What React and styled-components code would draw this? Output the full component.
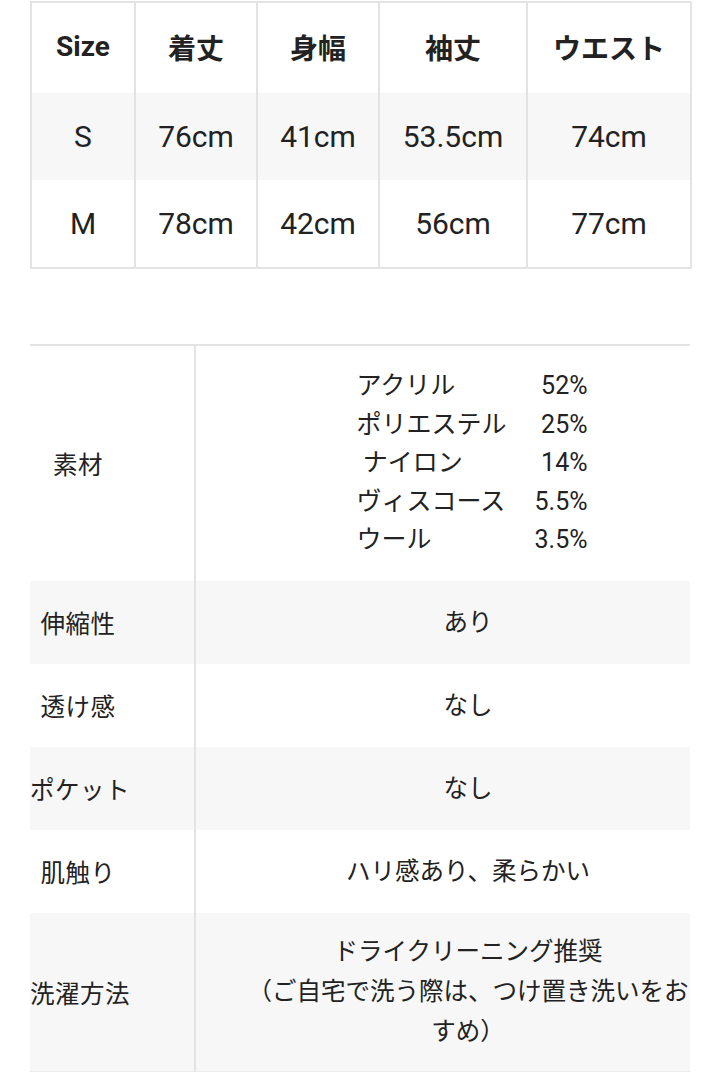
import React from 'react'
import styled, { createGlobalStyle } from 'styled-components'

const GlobalStyle = createGlobalStyle`
body {
  margin: 0;
  background: #ffffff;
  font-family: Roboto, "Noto Sans CJK JP", sans-serif;
  color: #222222;
}
`

const Page = styled.div`
  width: 720px;
  padding: 1px 30px 0;
  box-sizing: border-box;
`

const SizeTable = styled.table`
  width: 660px;
  border-collapse: collapse;
  table-layout: fixed;
  border: 2px solid #e3e3e3;
`

const SizeRow = styled.tr`
  background: ${(p) => (p.$shade ? '#f7f7f7' : '#ffffff')};
`

const SizeHead = styled.th`
  height: 87px;
  padding: 0 0 3px;
  font-size: 28px;
  font-weight: 700;
  text-align: center;
  border-left: 2px solid #e3e3e3;
  &:first-child {
    border-left: none;
  }
`

const SizeCell = styled.td`
  height: 87px;
  padding: 0;
  font-size: 30px;
  text-align: center;
  border-left: 2px solid #e3e3e3;
  &:first-child {
    border-left: none;
  }
`

const SpecTable = styled.table`
  width: 660px;
  margin-top: 75px;
  border-collapse: collapse;
  table-layout: fixed;
  border-top: 2px solid #e3e3e3;
  border-bottom: 1px solid #ececec;
`

const SpecRow = styled.tr`
  background: ${(p) => (p.$shade ? '#f7f7f7' : '#ffffff')};
`

const Label = styled.th`
  width: 165px;
  box-sizing: border-box;
  padding: 0 68px 0 0;
  font-size: 24.5px;
  font-weight: 400;
  letter-spacing: 0.5px;
  text-align: center;
  white-space: nowrap;
  border-right: 2px solid #e3e3e3;
`

const Value = styled.td`
  height: ${(p) => p.$h || 83}px;
  padding: 0 0 0 50px;
  font-size: 24.5px;
  line-height: ${(p) => p.$lh || 38}px;
  text-align: center;
`

const Materials = styled.div`
  display: inline-grid;
  grid-template-columns: auto auto;
  column-gap: 28px;
  margin-left: 8px;
  font-size: 25px;
  line-height: 38.5px;
  text-align: left;
`

const Pct = styled.span`
  text-align: right;
`

const sizes = [
  ['S', '76cm', '41cm', '53.5cm', '74cm'],
  ['M', '78cm', '42cm', '56cm', '77cm'],
]

const materials = [
  ['アクリル', '52%'],
  ['ポリエステル', '25%'],
  ['\u00a0ナイロン', '14%'],
  ['ヴィスコース', '5.5%'],
  ['ウール', '3.5%'],
]

const specs = [
  ['伸縮性', 'あり'],
  ['透け感', 'なし'],
  ['ポケット', 'なし'],
  ['肌触り', 'ハリ感あり、柔らかい'],
]

export default function App() {
  return (
    <Page>
      <GlobalStyle />
      <SizeTable>
        <colgroup>
          <col style={{ width: 104 }} />
          <col style={{ width: 122 }} />
          <col style={{ width: 122 }} />
          <col style={{ width: 148 }} />
          <col style={{ width: 164 }} />
        </colgroup>
        <thead>
          <SizeRow>
            <SizeHead>Size</SizeHead>
            <SizeHead>着丈</SizeHead>
            <SizeHead>身幅</SizeHead>
            <SizeHead>袖丈</SizeHead>
            <SizeHead>ウエスト</SizeHead>
          </SizeRow>
        </thead>
        <tbody>
          {sizes.map((row, i) => (
            <SizeRow key={row[0]} $shade={i % 2 === 0}>
              {row.map((v, j) => (
                <SizeCell key={j}>{v}</SizeCell>
              ))}
            </SizeRow>
          ))}
        </tbody>
      </SizeTable>

      <SpecTable>
        <tbody>
          <SpecRow>
            <Label>素材</Label>
            <Value $h={235}>
              <Materials>
                {materials.map(([name, pct]) => (
                  <React.Fragment key={name}>
                    <span>{name}</span>
                    <Pct>{pct}</Pct>
                  </React.Fragment>
                ))}
              </Materials>
            </Value>
          </SpecRow>
          {specs.map(([k, v], i) => (
            <SpecRow key={k} $shade={i % 2 === 0}>
              <Label>{k}</Label>
              <Value>{v}</Value>
            </SpecRow>
          ))}
          <SpecRow $shade>
            <Label>洗濯方法</Label>
            <Value $h={158} $lh={40}>
              ドライクリーニング推奨
              <br />
              （ご自宅で洗う際は、つけ置き洗いをおすめ）
            </Value>
          </SpecRow>
        </tbody>
      </SpecTable>
    </Page>
  )
}
